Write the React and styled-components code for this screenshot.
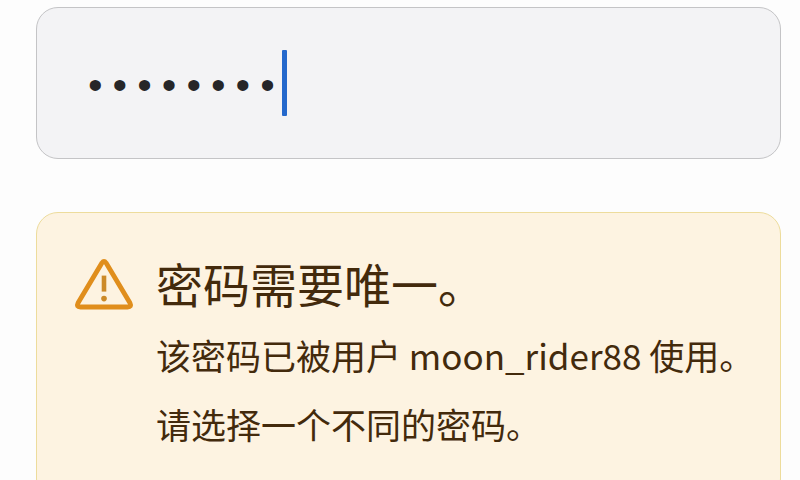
import React, { useState } from 'react';
import styled, { createGlobalStyle } from 'styled-components'

export default function App() {
    const [password, setPassword] = useState('rider088')

    return (
        <>
            <GlobalStyle />
            <Page>
                <Field htmlFor="password">
                    <PasswordInput
                        id="password"
                        type="password"
                        aria-label="密码"
                        aria-describedby="password-error"
                        autoComplete="off"
                        value={password}
                        onChange={e => setPassword(e.target.value)}
                    />
                    <Caret />
                </Field>

                <Alert id="password-error" role="alert">
                    <WarningIcon />
                    <Message>
                        <Title>密码需要唯一。</Title>
                        <Text>该密码已被用户 moon_rider88 使用。</Text>
                        <Text>请选择一个不同的密码。</Text>
                    </Message>
                </Alert>
            </Page>
        </>
    )
}

function WarningIcon() {
    return (
        <Icon viewBox="0 0 60 54" aria-hidden="true">
            <path
                d="M28 4.8 L4 45 Q2 49 6.4 49 H53.6 Q58 49 56 45 L32 4.8 Q30 2 28 4.8 Z"
                fill="none"
                stroke="#e08e1c"
                strokeWidth="4.8"
                strokeLinejoin="round"
            />
            <path d="M30 17.6 V33.6" stroke="#cc8a28" strokeWidth="4.6" />
            <circle cx="30" cy="40.6" r="2.8" fill="#cc8a28" />
        </Icon>
    )
}

const GlobalStyle = createGlobalStyle`
    * {
        box-sizing: border-box;
    }

    body {
        margin: 0;
        background: #fdfdfd;
        font-family: "Noto Sans CJK SC", sans-serif;
    }
`

const Page = styled.main`
    display: flex;
    flex-direction: column;
    gap: 53px;
    padding: 7px 19px 24px 36px;
`

const Box = styled.div`
    display: flex;
    border: 1px solid;
    border-radius: 22px;
`

const Field = styled(Box).attrs({ as: 'label' })`
    align-items: center;
    gap: 2px;
    padding: 42px 46px;
    border-color: #c4c4c6;
    background: #f3f3f5;
    cursor: text;
`

const PasswordInput = styled.input`
    field-sizing: content;
    min-width: 0;
    height: 66px;
    padding: 10px 0 0;
    border: 0;
    outline: 0;
    background: transparent;
    color: #262628;
    caret-color: transparent;
    font: 41px "Liberation Mono", monospace;
`

const Caret = styled.span`
    flex: none;
    width: 5px;
    height: 66px;
    border-radius: 1px;
    background: #2468cc;
`

const Alert = styled(Box)`
    align-items: flex-start;
    gap: 22px;
    padding: 36px 20px 42px 37px;
    border-color: #eddc9c;
    background: #fdf3e1;
`

const Icon = styled.svg`
    flex: none;
    width: 60px;
    height: 54px;
    margin-top: 9px;
`

const Message = styled.div`
    min-width: 0;
    color: #432a0c;
`

const Title = styled.h1`
    margin: 0 0 3px;
    font-size: 47px;
    font-weight: 400;
    line-height: 68px;
`

const Text = styled.p`
    margin: 0;
    font-size: 35px;
    line-height: 69px;
`
